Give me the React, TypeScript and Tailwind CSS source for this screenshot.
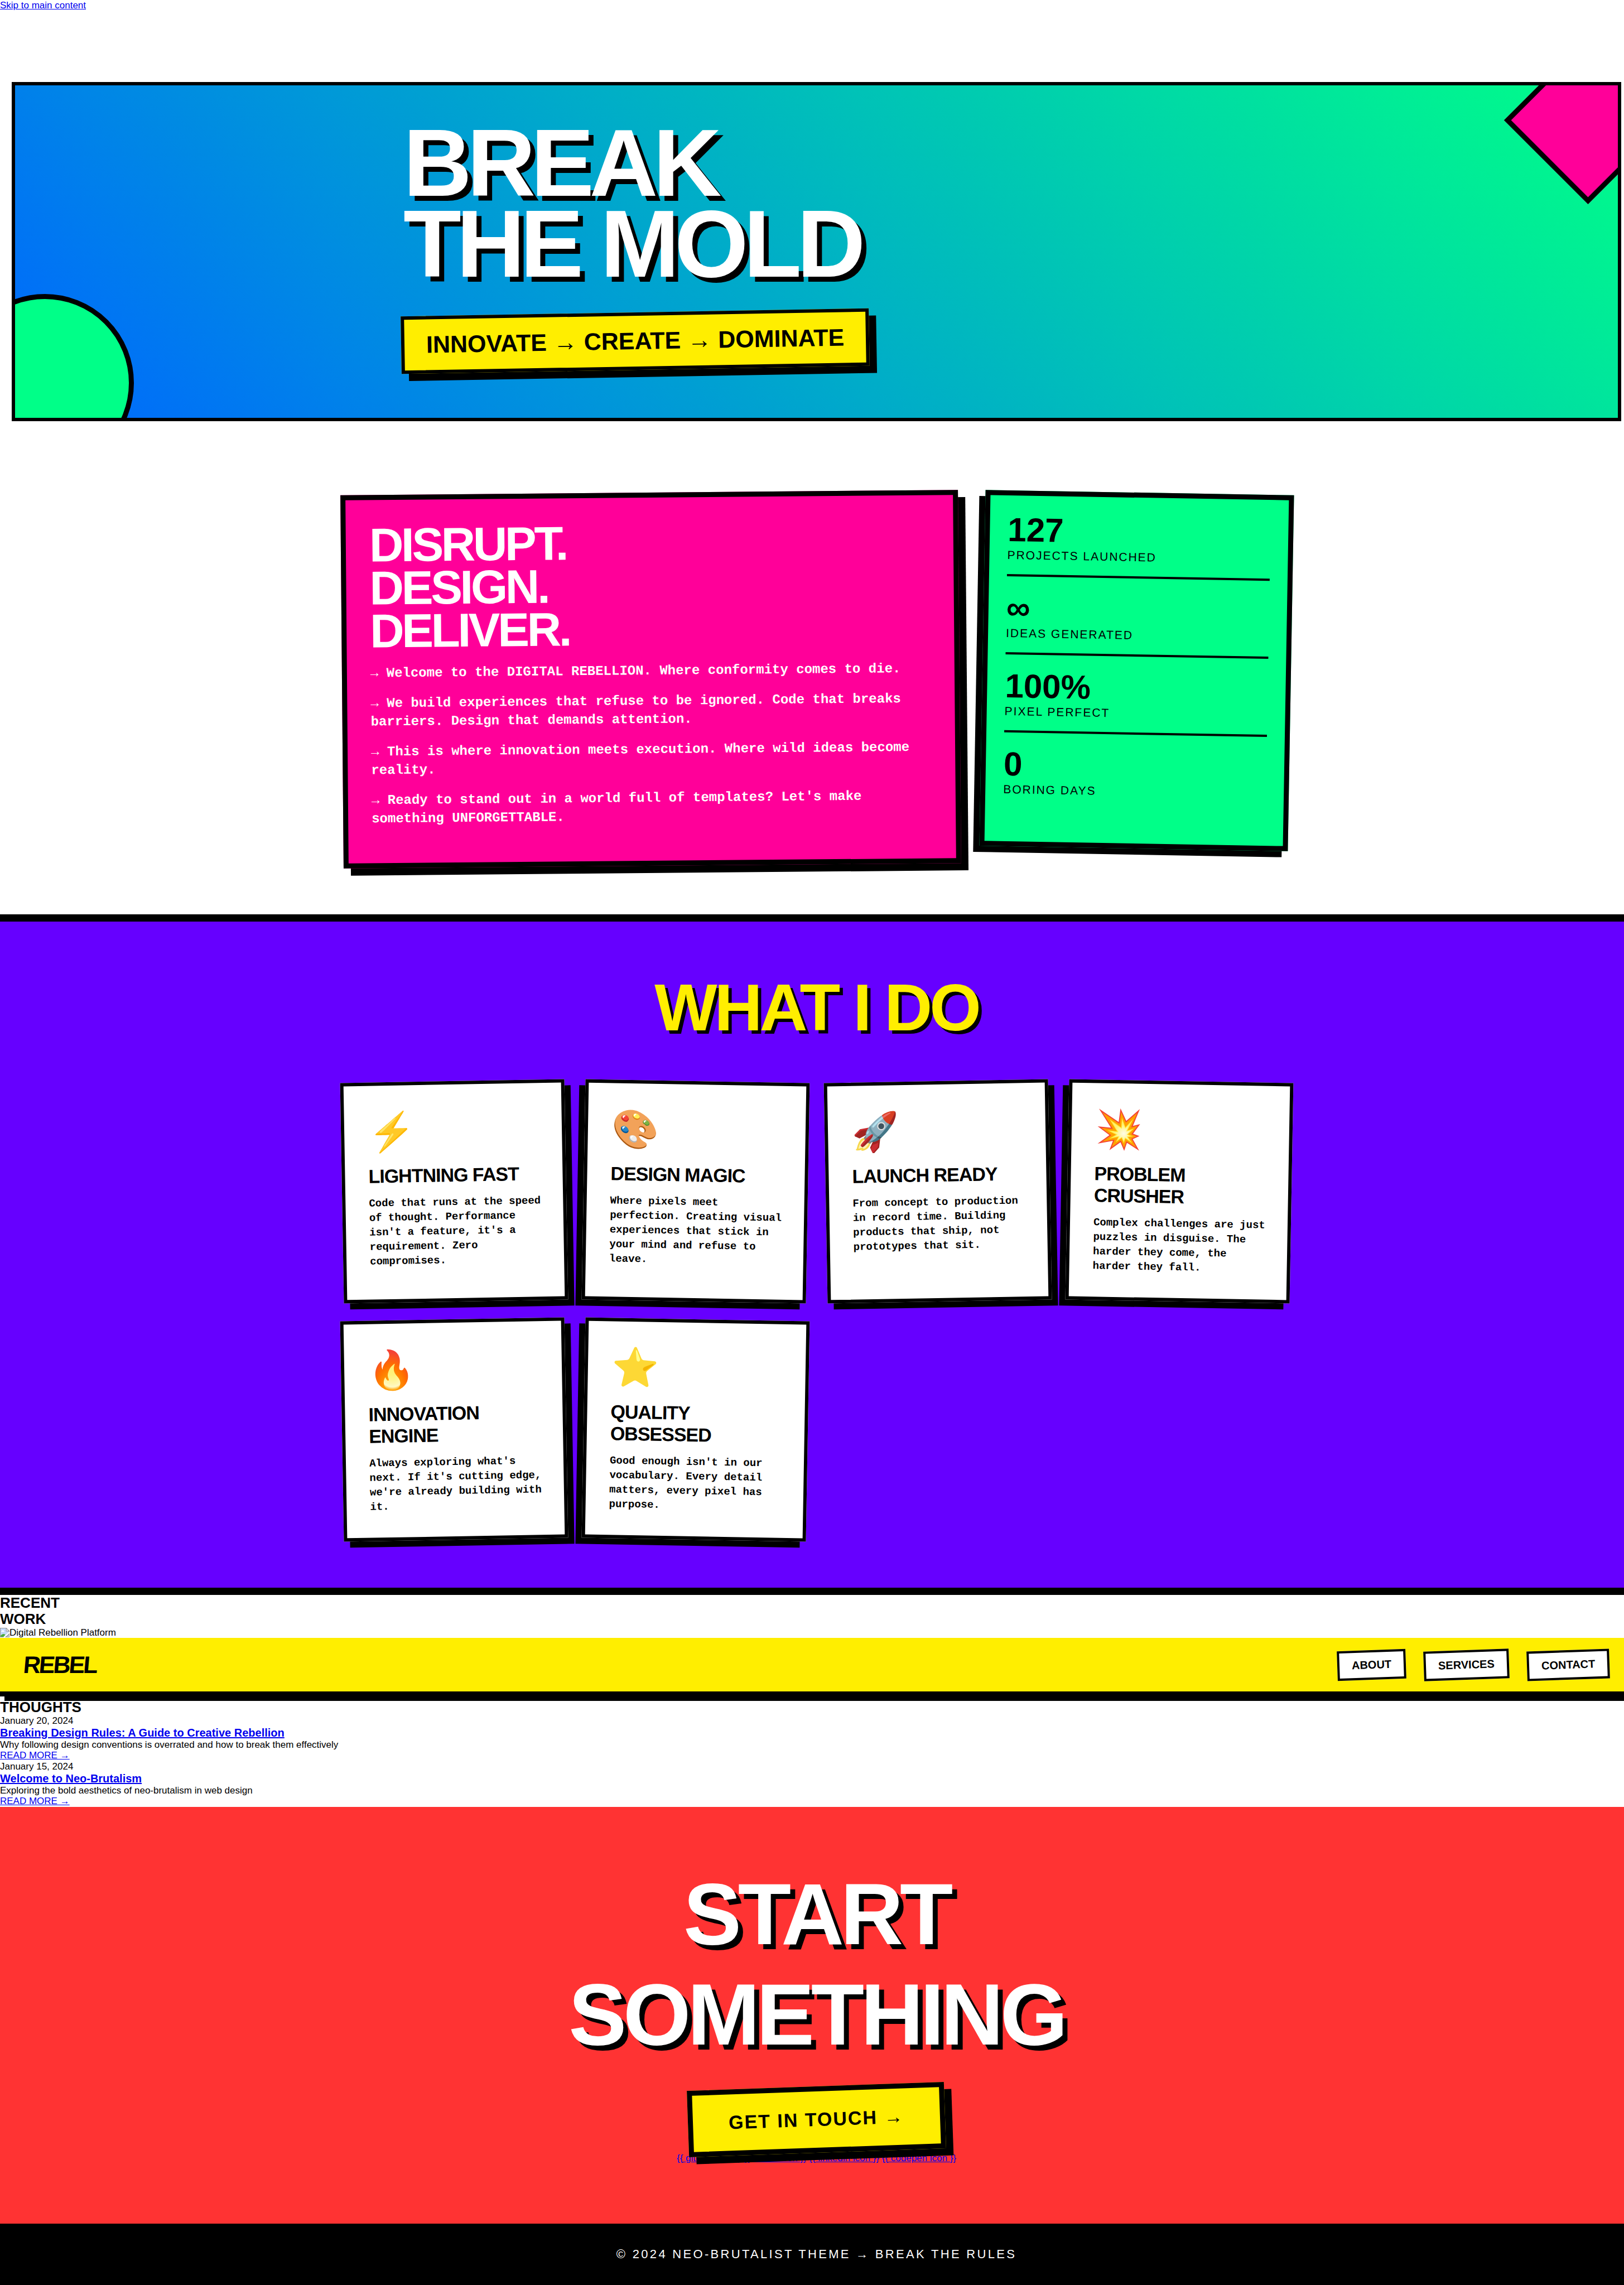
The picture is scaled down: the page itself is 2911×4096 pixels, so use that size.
const manifesto = [
  'Welcome to the DIGITAL REBELLION. Where conformity comes to die.',
  'We build experiences that refuse to be ignored. Code that breaks barriers. Design that demands attention.',
  'This is where innovation meets execution. Where wild ideas become reality.',
  "Ready to stand out in a world full of templates? Let's make something UNFORGETTABLE.",
];

const stats = [
  { value: '127', label: 'PROJECTS LAUNCHED' },
  { value: '∞', label: 'IDEAS GENERATED' },
  { value: '100%', label: 'PIXEL PERFECT' },
  { value: '0', label: 'BORING DAYS' },
];

const services = [
  {
    icon: '⚡',
    title: 'LIGHTNING FAST',
    text: "Code that runs at the speed of thought. Performance isn't a feature, it's a requirement. Zero compromises.",
  },
  {
    icon: '🎨',
    title: 'DESIGN MAGIC',
    text: 'Where pixels meet perfection. Creating visual experiences that stick in your mind and refuse to leave.',
  },
  {
    icon: '🚀',
    title: 'LAUNCH READY',
    text: 'From concept to production in record time. Building products that ship, not prototypes that sit.',
  },
  {
    icon: '💥',
    title: 'PROBLEM CRUSHER',
    text: 'Complex challenges are just puzzles in disguise. The harder they come, the harder they fall.',
  },
  {
    icon: '🔥',
    title: 'INNOVATION ENGINE',
    text: "Always exploring what's next. If it's cutting edge, we're already building with it.",
  },
  {
    icon: '⭐',
    title: 'QUALITY OBSESSED',
    text: "Good enough isn't in our vocabulary. Every detail matters, every pixel has purpose.",
  },
];

const posts = [
  {
    date: 'January 20, 2024',
    title: 'Breaking Design Rules: A Guide to Creative Rebellion',
    text: 'Why following design conventions is overrated and how to break them effectively',
  },
  {
    date: 'January 15, 2024',
    title: 'Welcome to Neo-Brutalism',
    text: 'Exploring the bold aesthetics of neo-brutalism in web design',
  },
];

const navItems = ['ABOUT', 'SERVICES', 'CONTACT'];
const socials = ['github', 'twitter', 'linkedin', 'codepen'];

function Hero() {
  return (
    <section className="relative mx-[21px] mt-[127px] overflow-hidden border-6 border-black bg-[linear-gradient(45deg,#0066ff,#00ff88)] pt-[67px] pb-[86px]">
      <div className="absolute -top-[44px] -right-[53px] size-[213px] rotate-45 border-9 border-black bg-[#ff0099]" />
      <div className="absolute -bottom-[97px] -left-[106px] size-[319px] rounded-full border-9 border-black bg-[#00ff88]" />
      <div className="relative mx-auto max-w-[1489px]">
        <h1 className="pl-1 text-[170px] leading-[145px] font-bold tracking-tighter text-white [text-shadow:9px_9px_0_#000]">
          BREAK
          <br />
          THE MOLD
        </h1>
        <p className="mt-[50px] inline-block -rotate-1 border-6 border-black bg-[#ffee00] px-[39px] py-[21px] align-top text-[43px] leading-[49px] font-bold shadow-[13px_13px_0_#000]">
          INNOVATE → CREATE → DOMINATE
        </p>
      </div>
    </section>
  );
}

function About() {
  return (
    <section className="mx-auto grid max-w-[1702px] grid-cols-[2fr_1fr] items-start gap-[42px] pt-[128px] pb-[87px]">
      <div className="-rotate-[0.5deg] border-9 border-black bg-[#ff0099] p-[42px] text-white shadow-[13px_13px_0_#000]">
        <h2 className="mb-[21px] text-[85px] leading-[77px] font-bold tracking-tighter">
          DISRUPT.
          <br />
          DESIGN.
          <br />
          DELIVER.
        </h2>
        {manifesto.map((line) => (
          <p key={line} className="mb-[21px] font-['Liberation_Mono',monospace] text-[24px] leading-[33px] font-bold">
            → {line}
          </p>
        ))}
      </div>
      <dl className="rotate-1 border-9 border-black bg-[#00ff88] p-8 shadow-[-11px_11px_0_#000]">
        {stats.map((s) => (
          <div key={s.label} className="mb-[27px] flex flex-col-reverse border-b-4 border-black pb-[22px] last:border-b-0">
            <dt className="mt-[3px] text-[21px] leading-6 tracking-[2px]">{s.label}</dt>
            <dd className="text-[60px] leading-[60px] font-bold">{s.value}</dd>
          </div>
        ))}
      </dl>
    </section>
  );
}

function Services() {
  return (
    <section className="border-y-13 border-black bg-[#6600ff] pt-[85px] pb-[86px]">
      <h2 className="mb-16 text-center text-[119px] leading-[137px] font-bold tracking-[-5px] text-[#ffee00] [text-shadow:6px_6px_0_#000]">
        WHAT I DO
      </h2>
      <div className="mx-auto grid max-w-[1702px] grid-cols-4 gap-8">
        {services.map((s) => (
          <article
            key={s.title}
            className="min-h-[395px] border-6 border-black bg-white pt-[42px] pr-[38px] pb-[42px] pl-[42px] odd:-rotate-1 odd:shadow-[11px_11px_0_#000] even:rotate-1 even:shadow-[-11px_11px_0_#000]"
          >
            <div className="mb-[21px] text-[68px] leading-[80px]">{s.icon}</div>
            <h3 className="mb-4 text-[34px] leading-[39px] font-bold tracking-[-1px]">{s.title}</h3>
            <p className="font-['Liberation_Mono',monospace] text-[19px] leading-[26px] font-bold">{s.text}</p>
          </article>
        ))}
      </div>
    </section>
  );
}

function BrokenImage() {
  return (
    <svg viewBox="0 0 16 16" className="size-[17px] shrink-0" aria-hidden="true">
      <path d="M.5 .5h10l5 5v5l-6 5h-9z" fill="#c5d9f7" stroke="#9a9a9a" />
      <path d="M10.5 .5v5h5z" fill="#fff" stroke="#9a9a9a" />
      <path d="M2 6.500q0-1.500 1.500-1.500q.5-1.500 2-1t1 1.500q1 0 1 1z" fill="#fff" />
      <path d="M1 15v-2q4-4.500 8-1.500L6.500 15z" fill="#4cab3c" />
      <path d="M6.500 16L16 7.500" stroke="#fff" strokeWidth="2" />
      <path d="M15.500 11v4.500h-5z" fill="#c5d9f7" stroke="#9a9a9a" />
    </svg>
  );
}

function RecentWork() {
  return (
    <section>
      <h2 className="text-[26px] leading-[29px] font-bold">
        RECENT
        <br />
        WORK
      </h2>
      <div className="flex h-[19px] items-center" role="img" aria-label="Digital Rebellion Platform">
        <BrokenImage />
        <span>Digital Rebellion Platform</span>
      </div>
    </section>
  );
}

function NavBar() {
  return (
    <header className="relative z-10 flex h-[105px] items-center justify-between border-b-9 border-black bg-[#ffee00] px-[42px] shadow-[8px_8px_0_#000]">
      <div className="-skew-x-[5deg] text-[43px] leading-[49px] font-bold tracking-[-3px]">REBEL</div>
      <nav>
        <ul className="flex gap-8">
          {navItems.map((item) => (
            <li key={item}>
              <a
                href={'#' + item.toLowerCase()}
                className="block -rotate-2 border-4 border-black bg-white px-[22px] py-[11px] text-[20px] leading-[23px] font-bold"
              >
                {item}
              </a>
            </li>
          ))}
        </ul>
      </nav>
    </header>
  );
}

function Thoughts() {
  return (
    <section className="pt-[5px]">
      <h2 className="text-[26px] leading-[29px] font-bold">THOUGHTS</h2>
      {posts.map((p) => (
        <article key={p.title}>
          <div className="leading-[20px]">{p.date}</div>
          <h3 className="text-[20px] leading-[23px] font-bold">
            <a href="#post" className="text-[#0000ee] underline">
              {p.title}
            </a>
          </h3>
          <p className="leading-[19px]">{p.text}</p>
          <div className="leading-[20px]">
            <a href="#post" className="text-[#0000ee] underline">
              READ MORE →
            </a>
          </div>
        </article>
      ))}
    </section>
  );
}

function Contact() {
  return (
    <section className="bg-[#ff3333] pt-[102px] pb-[107px] text-center">
      <h2 className="text-[156px] leading-[180px] font-bold tracking-[-0.04em] text-white [text-shadow:9px_9px_0_#000]">
        START
        <br />
        SOMETHING
      </h2>
      <a
        href="#contact"
        className="relative z-10 mt-[39px] inline-block -rotate-2 border-9 border-black bg-[#ffee00] px-16 py-[31px] align-top text-[34px] leading-[39px] font-bold tracking-[2px] shadow-[13px_13px_0_#000]"
      >
        GET IN TOUCH →
      </a>
      <div className="leading-[20px]">
        {socials.map((name, i) => (
          <span key={name}>
            {i > 0 && ' '}
            <a href={'#' + name} className="text-[#0000ee] underline">
              {'{{ ' + name + ' icon }}'}
            </a>
          </span>
        ))}
      </div>
    </section>
  );
}

export default function App() {
  return (
    <div className="overflow-hidden bg-white font-['Liberation_Sans',Arial,sans-serif] text-[17px] leading-[20px] text-black">
      <div className="w-[calc(100%+16px)]">
        <a href="#main" className="block w-fit text-[#0000ee] underline">
          Skip to main content
        </a>
        <main id="main">
          <Hero />
          <About />
          <Services />
          <RecentWork />
          <NavBar />
          <Thoughts />
          <Contact />
        </main>
        <footer className="bg-black py-[42px] text-center text-[22px] leading-[26px] tracking-[0.15em] text-white">
          © 2024 NEO-BRUTALIST THEME → BREAK THE RULES
        </footer>
      </div>
    </div>
  );
}
